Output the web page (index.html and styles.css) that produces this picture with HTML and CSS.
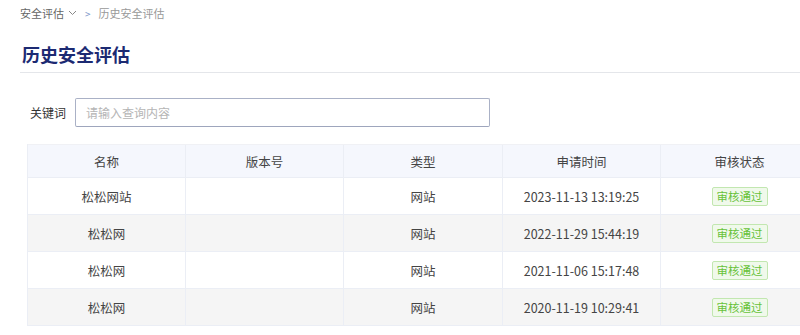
FILE: index.html
```html
<!DOCTYPE html>
<html lang="zh-CN">
<head>
<meta charset="utf-8">
<title>历史安全评估</title>
<link rel="stylesheet" href="styles.css">
</head>
<body>
<div class="page">
  <div class="breadcrumb">
    <span class="crumb">安全评估</span>
    <svg class="caret" width="9" height="6" viewBox="0 0 9 6"><path d="M1 1 L4.5 4.5 L8 1" fill="none" stroke="#888" stroke-width="1"/></svg>
    <span class="sep">&gt;</span>
    <span class="crumb current">历史安全评估</span>
  </div>
  <h1 class="title">历史安全评估</h1>
  <div class="search">
    <label class="search-label">关键词</label>
    <input class="search-input" type="text" placeholder="请输入查询内容">
  </div>
  <div class="table">
    <div class="row head">
      <div class="cell">名称</div>
      <div class="cell">版本号</div>
      <div class="cell">类型</div>
      <div class="cell">申请时间</div>
      <div class="cell">审核状态</div>
    </div>
    <div class="row">
      <div class="cell">松松网站</div>
      <div class="cell"></div>
      <div class="cell">网站</div>
      <div class="cell">2023-11-13 13:19:25</div>
      <div class="cell"><span class="tag">审核通过</span></div>
    </div>
    <div class="row striped">
      <div class="cell">松松网</div>
      <div class="cell"></div>
      <div class="cell">网站</div>
      <div class="cell">2022-11-29 15:44:19</div>
      <div class="cell"><span class="tag">审核通过</span></div>
    </div>
    <div class="row">
      <div class="cell">松松网</div>
      <div class="cell"></div>
      <div class="cell">网站</div>
      <div class="cell">2021-11-06 15:17:48</div>
      <div class="cell"><span class="tag">审核通过</span></div>
    </div>
    <div class="row striped">
      <div class="cell">松松网</div>
      <div class="cell"></div>
      <div class="cell">网站</div>
      <div class="cell">2020-11-19 10:29:41</div>
      <div class="cell"><span class="tag">审核通过</span></div>
    </div>
  </div>
</div>
</body>
</html>
```

FILE: styles.css
```css
html, body {
  margin: 0;
  padding: 0;
  background: #fff;
  overflow: hidden;
}
body {
  font-family: "Noto Sans CJK SC", "Noto Sans", sans-serif;
  color: #333;
}
.page {
  padding-left: 20px;
}
.breadcrumb {
  height: 26px;
  display: flex;
  align-items: center;
  font-size: 11px;
  color: #666;
}
.caret {
  margin-left: 4px;
}
.sep {
  margin: 0 8px 0 8px;
  color: #7a95c8;
  font-size: 10px;
}
.crumb.current {
  color: #999;
}
.title {
  margin: 13px 0 0 0;
  padding-left: 2px;
  font-size: 18px;
  font-weight: bold;
  color: #1c2a72;
  line-height: 30px;
  height: 34px;
  box-sizing: border-box;
  border-bottom: 1px solid #e4e6ea;
}
.search {
  margin-top: 25px;
  display: flex;
  align-items: center;
  padding-left: 10px;
}
.search-label {
  font-size: 12px;
  color: #333;
  width: 45px;
}
.search-input {
  box-sizing: border-box;
  width: 415px;
  height: 29px;
  border: 1px solid #aab1c6;
  border-bottom-color: #9ea6bd;
  border-radius: 2px;
  padding: 0 10px;
  font-family: inherit;
  font-size: 12px;
  outline: none;
}
.search-input::placeholder {
  color: #b5b5b5;
}
.table {
  margin: 17px 0 0 7px;
  width: 791px;
  border-left: 1px solid #ebeef5;
  font-size: 12.5px;
}
.row {
  display: grid;
  grid-template-columns: 158px 158px 159px 158px 158px;
  height: 37px;
  box-sizing: border-box;
  border-bottom: 1px solid #ebeef5;
  background: #fff;
}
.row.head {
  height: 34px;
  background: #f5f7fd;
  border-top: 1px solid #f0f1f5;
}
.row.striped {
  background: #f5f5f5;
}
.cell {
  display: flex;
  align-items: center;
  justify-content: center;
  border-right: 1px solid #ebeef5;
  color: #444;
}
.tag {
  display: inline-block;
  box-sizing: border-box;
  height: 19px;
  line-height: 17px;
  padding: 0 4px;
  font-size: 11.5px;
  color: #67c23a;
  background: #f0f9eb;
  border: 1px solid #c2e7b0;
  border-radius: 2px;
}
```
